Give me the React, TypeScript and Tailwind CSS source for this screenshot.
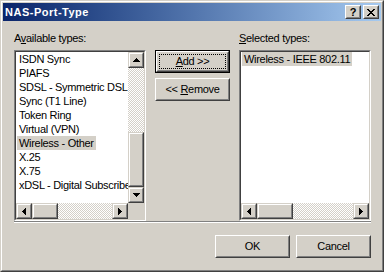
import React from "react";

const raisedOuter = "border border-t-white border-l-white border-r-[#404040] border-b-[#404040]";
const raisedInner = "border border-t-[#d4d0c8] border-l-[#d4d0c8] border-r-[#808080] border-b-[#808080]";

function Arrow({ dir }: { dir: "up" | "down" | "left" | "right" }) {
  if (dir === "up" || dir === "down") {
    const rows = dir === "up" ? [0, 1, 2, 3] : [3, 2, 1, 0];
    return (
      <svg width="7" height="4" shapeRendering="crispEdges">
        {rows.map((r, i) => (
          <rect key={i} x={3 - r} y={i} width={r * 2 + 1} height="1" fill="#000" />
        ))}
      </svg>
    );
  }
  const cols = dir === "left" ? [0, 1, 2, 3] : [3, 2, 1, 0];
  return (
    <svg width="4" height="7" shapeRendering="crispEdges">
      {cols.map((c, i) => (
        <rect key={i} x={i} y={3 - c} width="1" height={c * 2 + 1} fill="#000" />
      ))}
    </svg>
  );
}

// scrollbar button / thumb
function ScrollPiece({ className, children }: { className: string; children?: React.ReactNode }) {
  return (
    <div className={`shrink-0 bg-[#d4d0c8] border border-t-[#d4d0c8] border-l-[#d4d0c8] border-r-[#404040] border-b-[#404040] ${className}`}>
      <div className="w-full h-full border border-t-white border-l-white border-r-[#808080] border-b-[#808080] flex items-center justify-center">
        {children}
      </div>
    </div>
  );
}

function Track({ className }: { className: string }) {
  return (
    <div className={`bg-[repeating-conic-gradient(#d4d0c8_0%_25%,#ffffff_0%_50%)] bg-[length:2px_2px] ${className}`} />
  );
}

function ListBox({
  items,
  selected,
  vscroll,
  thumbW,
}: {
  items: string[];
  selected: string;
  vscroll: boolean;
  thumbW: string;
}) {
  return (
    <div className="w-[132px] h-[171px] border border-t-[#808080] border-l-[#808080] border-r-white border-b-white">
      <div className="h-full border border-t-[#404040] border-l-[#404040] border-r-[#d4d0c8] border-b-[#d4d0c8] bg-white flex flex-col">
        <div className="flex h-[151px]">
          <div className="flex-1 overflow-hidden whitespace-nowrap">
            {items.map((it) => (
              <div key={it} className="h-[14px] leading-[14px] pl-[1px]">
                <span className={`inline-block px-[2px] ${it === selected ? "bg-[#d4d0c8]" : ""}`}>{it}</span>
              </div>
            ))}
          </div>
          {vscroll && (
            <div className="w-4 flex flex-col">
              <ScrollPiece className="w-4 h-4">
                <Arrow dir="up" />
              </ScrollPiece>
              <Track className="h-[64px]" />
              <ScrollPiece className="w-4 h-[55px]" />
              <ScrollPiece className="w-4 h-4">
                <Arrow dir="down" />
              </ScrollPiece>
            </div>
          )}
        </div>
        <div className="flex h-4">
          <ScrollPiece className="w-4 h-4">
            <Arrow dir="left" />
          </ScrollPiece>
          <ScrollPiece className={`h-4 ${thumbW}`} />
          <Track className="flex-1" />
          <ScrollPiece className="w-4 h-4">
            <Arrow dir="right" />
          </ScrollPiece>
          {vscroll && <div className="w-4 bg-[#d4d0c8]" />}
        </div>
      </div>
    </div>
  );
}

function PushButton({ children, isDefault }: { children: React.ReactNode; isDefault?: boolean }) {
  if (isDefault) {
    return (
      <div className="relative w-[75px] h-[23px] border border-black">
        <div className={`h-full ${raisedOuter}`}>
          <div className={`h-full ${raisedInner} flex items-center justify-center`}>{children}</div>
        </div>
        <div className="absolute inset-[3px] border border-dotted border-black" />
      </div>
    );
  }
  return (
    <div className={`w-[75px] h-[23px] ${raisedOuter}`}>
      <div className={`h-full ${raisedInner} flex items-center justify-center`}>{children}</div>
    </div>
  );
}

function TitleButton({ children }: { children: React.ReactNode }) {
  return (
    <div className={`w-4 h-[14px] bg-[#d4d0c8] ${raisedOuter}`}>
      <div className={`h-full ${raisedInner} flex items-center justify-center`}>{children}</div>
    </div>
  );
}

const available = [
  "ISDN Sync",
  "PIAFS",
  "SDSL - Symmetric DSL",
  "Sync (T1 Line)",
  "Token Ring",
  "Virtual (VPN)",
  "Wireless - Other",
  "X.25",
  "X.75",
  "xDSL - Digital Subscriber Line",
];

export default function App() {
  return (
    <div className="w-[384px] h-[272px] border border-t-[#d4d0c8] border-l-[#d4d0c8] border-r-[#404040] border-b-[#404040] font-['Liberation_Sans',Arial,sans-serif] text-[11px] text-black tracking-[-0.3px] select-none">
      <div className="h-full border border-t-white border-l-white border-r-[#808080] border-b-[#808080] bg-[#d4d0c8] p-px flex flex-col">
        {/* Title bar */}
        <div className="h-[18px] shrink-0 flex items-center bg-linear-to-r from-[#0a246a] to-[#a6caf0] pl-[2px] pr-[2px]">
          <span className="flex-1 text-white font-bold text-[11px] tracking-[0.5px] leading-none">NAS-Port-Type</span>
          <div className="flex gap-[2px]">
            <TitleButton>
              <span className="font-bold text-[11px] leading-none tracking-normal">?</span>
            </TitleButton>
            <TitleButton>
              <svg width="8" height="7" shapeRendering="crispEdges">
                <path d="M0 0h2v1h-2zM6 0h2v1h-2zM1 1h2v1h-2zM5 1h2v1h-2zM2 2h4v1h-4zM3 3h2v1h-2zM2 4h4v1h-4zM1 5h2v1h-2zM5 5h2v1h-2zM0 6h2v1h-2zM6 6h2v1h-2z" fill="#000" />
              </svg>
            </TitleButton>
          </div>
        </div>

        {/* Client area */}
        <div className="flex-1 pl-[11px] pt-[11px]">
          <div className="flex gap-[9px]">
            <div className="w-[132px]">
              <div className="h-[13px] leading-[13px] mb-[5px]">
                A<span className="underline">v</span>ailable types:
              </div>
              <ListBox items={available} selected="Wireless - Other" vscroll thumbW="w-[26px]" />
            </div>

            <div className="w-[75px] pt-[18px] flex flex-col gap-[5px]">
              <PushButton isDefault>
                <span>
                  <span className="underline">A</span>dd &gt;&gt;
                </span>
              </PushButton>
              <PushButton>
                <span>
                  &lt;&lt; <span className="underline">R</span>emove
                </span>
              </PushButton>
            </div>

            <div className="w-[132px]">
              <div className="h-[13px] leading-[13px] mb-[5px]">
                <span className="underline">S</span>elected types:
              </div>
              <ListBox items={["Wireless - IEEE 802.11"]} selected="Wireless - IEEE 802.11" vscroll={false} thumbW="w-[36px]" />
            </div>
          </div>

          {/* Separator */}
          <div className="w-[357px] h-[2px] border-t border-t-[#808080] border-b border-b-white" />

          {/* Bottom buttons */}
          <div className="w-[357px] mt-[12px] flex justify-end gap-[6px]">
            <PushButton>OK</PushButton>
            <PushButton>Cancel</PushButton>
          </div>
        </div>
      </div>
    </div>
  );
}
